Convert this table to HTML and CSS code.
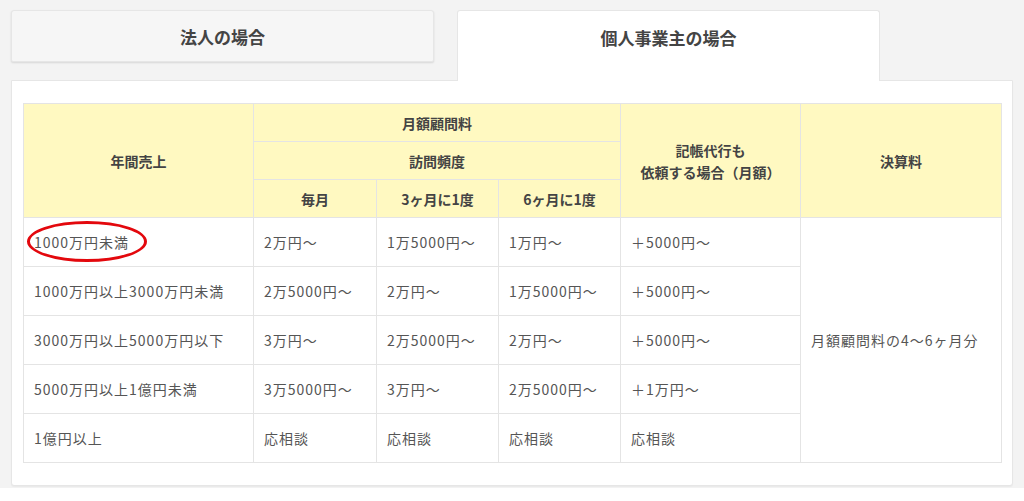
FILE: index.html
```html
<!DOCTYPE html>
<html lang="ja">
<head>
<meta charset="utf-8">
<link rel="stylesheet" href="styles.css">
</head>
<body>
<div class="page">
  <div class="tabs">
    <div class="tab tab-off">法人の場合</div>
    <div class="tab tab-on">個人事業主の場合</div>
  </div>
  <div class="panel">
    <table class="fees">
      <colgroup>
        <col class="c1"><col class="c2"><col class="c3"><col class="c4"><col class="c5"><col class="c6">
      </colgroup>
      <thead>
        <tr>
          <th rowspan="3">年間売上</th>
          <th colspan="3">月額顧問料</th>
          <th rowspan="3">記帳代行も<br>依頼する場合（月額）</th>
          <th rowspan="3">決算料</th>
        </tr>
        <tr><th colspan="3">訪問頻度</th></tr>
        <tr><th>毎月</th><th>3ヶ月に1度</th><th>6ヶ月に1度</th></tr>
      </thead>
      <tbody>
        <tr>
          <td class="marked"><span class="ring"></span>1000万円未満</td>
          <td>2万円～</td><td>1万5000円～</td><td>1万円～</td><td>＋5000円～</td>
          <td rowspan="5">月額顧問料の4～6ヶ月分</td>
        </tr>
        <tr><td>1000万円以上3000万円未満</td><td>2万5000円～</td><td>2万円～</td><td>1万5000円～</td><td>＋5000円～</td></tr>
        <tr><td>3000万円以上5000万円以下</td><td>3万円～</td><td>2万5000円～</td><td>2万円～</td><td>＋5000円～</td></tr>
        <tr><td>5000万円以上1億円未満</td><td>3万5000円～</td><td>3万円～</td><td>2万5000円～</td><td>＋1万円～</td></tr>
        <tr><td>1億円以上</td><td>応相談</td><td>応相談</td><td>応相談</td><td>応相談</td></tr>
      </tbody>
    </table>
  </div>
</div>
</body>
</html>
```

FILE: styles.css
```css
html, body {
  margin: 0;
  padding: 0;
  background: #fff;
}
body {
  font-family: "Noto Sans CJK JP", "Noto Sans", sans-serif;
  color: #555;
  width: 1024px;
  height: 501px;
  overflow: hidden;
}
.page {
  box-sizing: border-box;
  height: 488px;
  background: #f3f3f3;
  padding: 10px 0 0 11px;
}
.tabs {
  display: flex;
  gap: 23px;
  align-items: flex-start;
  position: relative;
  z-index: 2;
}
.tab {
  box-sizing: border-box;
  width: 423px;
  display: flex;
  justify-content: center;
  font-size: 17px;
  font-weight: bold;
  color: #444;
  border: 1px solid #e6e6e6;
  border-radius: 3px 3px 2px 2px;
}
.tab-off {
  height: 52px;
  background: #f6f6f6;
  align-items: center;
  box-shadow: 0 1px 2px rgba(0,0,0,0.12);
}
.tab-on {
  height: 71px;
  background: #fff;
  border-bottom: none;
  border-radius: 3px 3px 0 0;
  padding-top: 14px;
}
.panel {
  box-sizing: border-box;
  width: 1002px;
  margin-top: -1px;
  background: #fff;
  border: 1px solid #e6e6e6;
  border-radius: 0 0 3px 3px;
  box-shadow: 0 1px 1px rgba(0,0,0,0.04);
  padding: 22px 11px 22px 11px;
  position: relative;
  z-index: 1;
}
.fees {
  width: 978px;
  table-layout: fixed;
  border-collapse: collapse;
  font-size: 14px;
}
.c1 { width: 230px; }
.c2 { width: 123px; }
.c3 { width: 122px; }
.c4 { width: 122px; }
.c5 { width: 180px; }
.c6 { width: 201px; }
.fees th, .fees td {
  border: 1px solid #e4e4e4;
  padding: 0 10px;
}
.fees th {
  background: #fff9c1;
  color: #444;
  font-weight: bold;
  text-align: center;
  height: 37px;
  line-height: 22px;
}
.fees td {
  height: 48px;
  text-align: left;
  letter-spacing: 1px;
  color: #555;
}
.marked {
  position: relative;
}
.ring {
  position: absolute;
  left: 3px;
  top: 3px;
  width: 114px;
  height: 35px;
  border: 3px solid #e3080d;
  border-radius: 50%;
}
```
